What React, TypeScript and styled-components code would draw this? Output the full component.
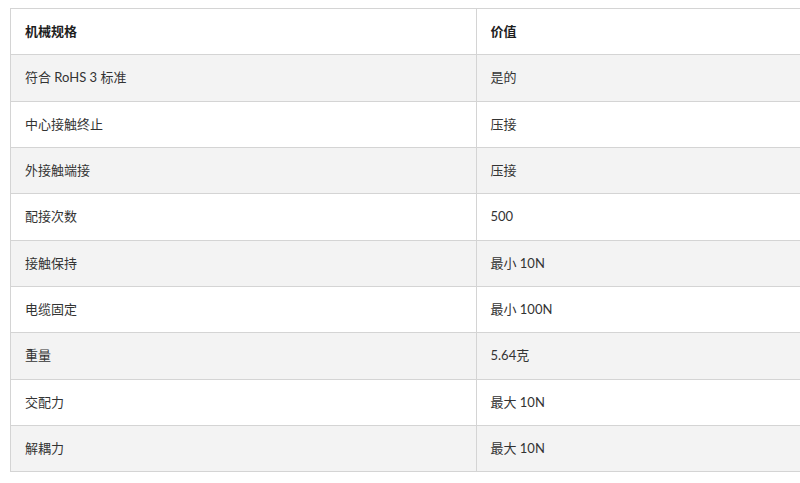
import React from "react";
import styled, { createGlobalStyle } from "styled-components";

const rows: [string, string][] = [
  ["符合 RoHS 3 标准", "是的"],
  ["中心接触终止", "压接"],
  ["外接触端接", "压接"],
  ["配接次数", "500"],
  ["接触保持", "最小 10N"],
  ["电缆固定", "最小 100N"],
  ["重量", "5.64克"],
  ["交配力", "最大 10N"],
  ["解耦力", "最大 10N"],
];

const GlobalStyle = createGlobalStyle`
  html, body {
    margin: 0;
    padding: 0;
    background: #ffffff;
    overflow: hidden;
  }
  body {
    font-family: Lato, "Noto Sans CJK SC", sans-serif;
    color: #333333;
  }
`;

const Page = styled.div`
  padding: 8px 0 0 10px;
  width: 940px;
`;

const SpecTable = styled.table`
  width: 932px;
  border-collapse: collapse;
  border: 1px solid #d4d4d4;
  font-size: 13px;
`;

const Row = styled.tr<{ $striped?: boolean }>`
  background: ${(p) => (p.$striped ? "#f3f3f3" : "#ffffff")};
`;

const Cell = styled.td`
  border: 1px solid #d4d4d4;
  padding: 13px 14px;
  line-height: 19.33px;
  text-align: left;
  vertical-align: middle;
  width: 50%;
`;

const HeadCell = styled(Cell).attrs({ as: "th" })`
  font-weight: 700;
  color: #1e1e1e;
`;

export default function App() {
  return (
    <>
      <GlobalStyle />
      <Page>
        <SpecTable>
          <thead>
            <Row>
              <HeadCell>机械规格</HeadCell>
              <HeadCell>价值</HeadCell>
            </Row>
          </thead>
          <tbody>
            {rows.map(([name, value], i) => (
              <Row key={name} $striped={i % 2 === 0}>
                <Cell>{name}</Cell>
                <Cell>{value}</Cell>
              </Row>
            ))}
          </tbody>
        </SpecTable>
      </Page>
    </>
  );
}
